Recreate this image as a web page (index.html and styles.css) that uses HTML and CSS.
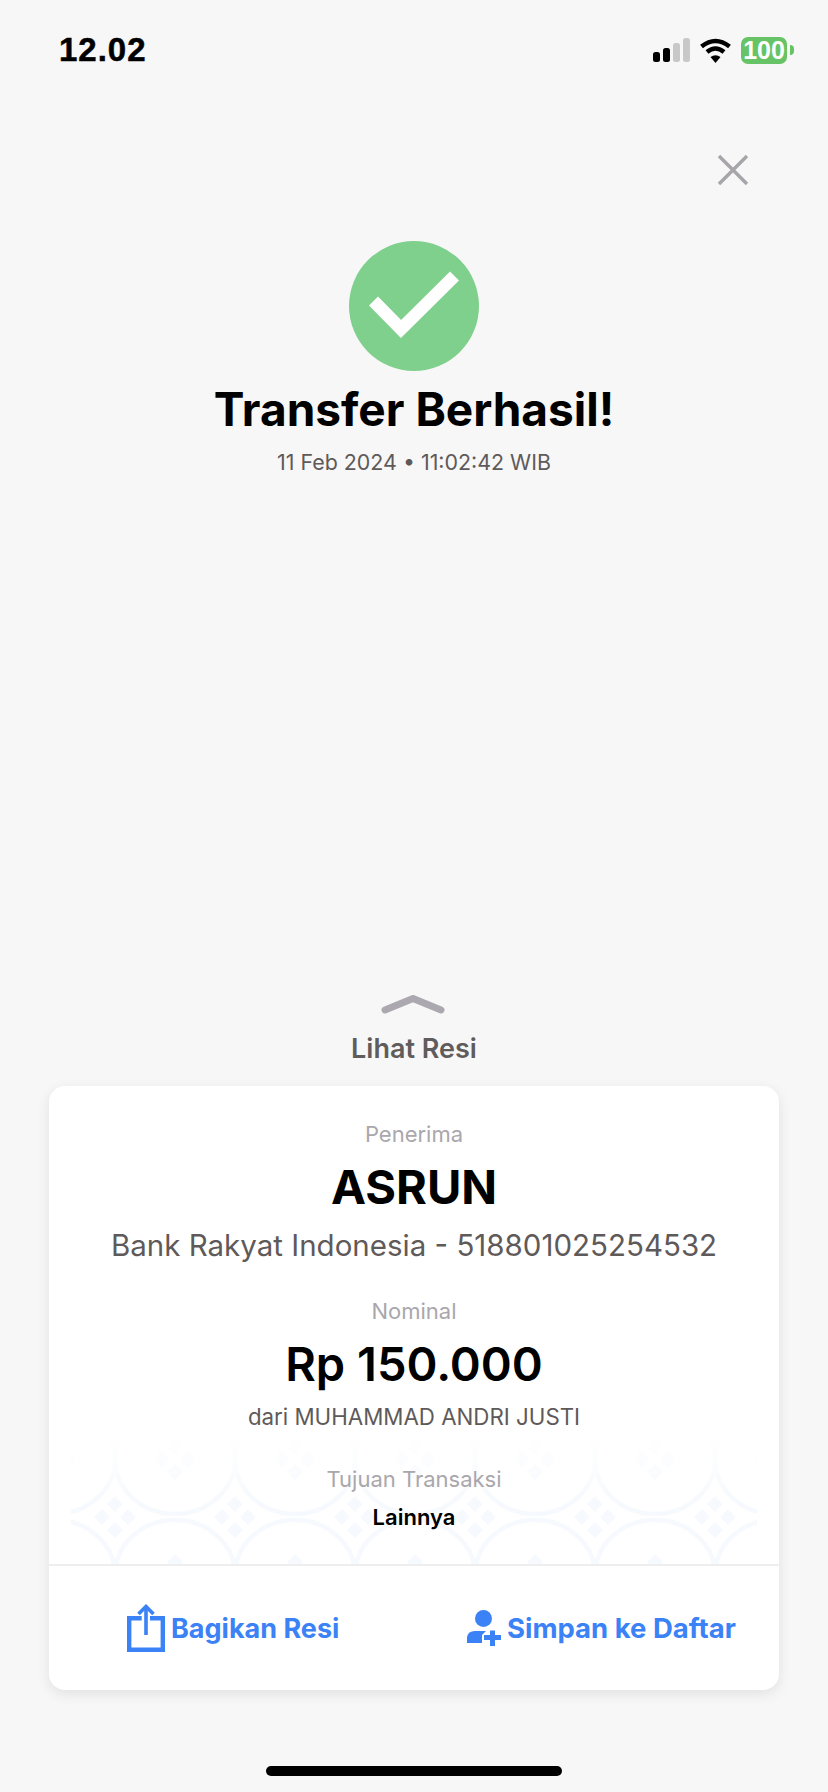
FILE: index.html
```html
<!DOCTYPE html>
<html lang="id">
<head>
  <meta charset="UTF-8">
  <title>Transfer Berhasil</title>
  <link rel="stylesheet" href="styles.css">
</head>
<body>

<div class="screen">
  <div class="status-bar">
    <span class="time">12.02</span>
    <div class="status-icons">
      <svg width="37" height="24" viewBox="0 0 37 24">
        <rect x="0" y="14" width="7" height="10" rx="2.500" fill="#000"/>
        <rect x="10" y="10" width="7" height="14" rx="2.500" fill="#000"/>
        <rect x="20" y="5" width="7" height="19" rx="2.500" fill="#c8c8c8"/>
        <rect x="30" y="0" width="7" height="24" rx="2.500" fill="#c8c8c8"/>
      </svg>
      <svg width="31" height="25" viewBox="0 0 31 25">
        <path d="M1.500 8.500 Q15.500 -2.500 29.500 8.500" fill="none" stroke="#000" stroke-width="4.500"/>
        <path d="M7 14 Q15.500 7 24 14" fill="none" stroke="#000" stroke-width="4.500"/>
        <path d="M10.500 19 L15.500 25 L20.500 19 Q15.500 15.500 10.500 19 Z" fill="#000"/>
      </svg>
      <div class="battery">
        <span class="battery-body">100</span>
        <span class="battery-tip"></span>
      </div>
    </div>
  </div>

  <div class="close-row">
    <svg width="32" height="32" viewBox="0 0 32 32">
      <path d="M2 2 L30 30 M30 2 L2 30" stroke="#a8a5aa" stroke-width="3.400" fill="none"/>
    </svg>
  </div>

  <div class="result">
    <svg width="130" height="130" viewBox="0 0 130 130">
      <circle cx="65" cy="65" r="65" fill="#7fd08c"/>
      <path d="M24.500 60 L52 88 L105.500 35" fill="none" stroke="#fff" stroke-width="12.700"/>
    </svg>
    <h1>Transfer Berhasil!</h1>
    <p class="date">11 Feb 2024 • 11:02:42 WIB</p>
  </div>

  <div class="spacer"></div>

  <div class="receipt-toggle">
    <svg class="chevron" width="66" height="22" viewBox="0 0 66 22">
      <path d="M4 17 L32 5.500 L60 17" fill="none" stroke="#aca8b0" stroke-width="7" stroke-linecap="round" stroke-linejoin="round"/>
    </svg>
    <span>Lihat Resi</span>
  </div>

  <div class="card">
    <div class="card-body">
      <svg class="batik" width="686" height="130" viewBox="0 0 686 130">
        <defs>
          <g id="diamonds">
            <path d="M0 -21 L8 -13 L0 -5 L-8 -13 Z"/>
            <path d="M0 5 L8 13 L0 21 L-8 13 Z"/>
            <path d="M-21 0 L-13 -8 L-5 0 L-13 8 Z"/>
            <path d="M5 0 L13 -8 L21 0 L13 8 Z"/>
          </g>
          <pattern id="batik-tile" width="120" height="116" x="-16" y="25" patternUnits="userSpaceOnUse">
            <g fill="none" stroke="#f6f9fd" stroke-width="4.500">
              <ellipse cx="0" cy="0" rx="60" ry="55"/>
              <ellipse cx="120" cy="0" rx="60" ry="55"/>
              <ellipse cx="0" cy="116" rx="60" ry="55"/>
              <ellipse cx="120" cy="116" rx="60" ry="55"/>
            </g>
            <g fill="#f6f9fd">
              <use href="#diamonds" x="60" y="58"/>
              <use href="#diamonds" x="0" y="0"/>
              <use href="#diamonds" x="120" y="0"/>
              <use href="#diamonds" x="0" y="116"/>
              <use href="#diamonds" x="120" y="116"/>
            </g>
          </pattern>
        </defs>
        <rect width="686" height="130" fill="url(#batik-tile)"/>
      </svg>

      <div class="label first">Penerima</div>
      <div class="name">ASRUN</div>
      <div class="bank">Bank Rakyat Indonesia - 518801025254532</div>

      <div class="label nominal-label">Nominal</div>
      <div class="amount">Rp 150.000</div>
      <div class="sender">dari MUHAMMAD ANDRI JUSTI</div>

      <div class="label purpose-label">Tujuan Transaksi</div>
      <div class="purpose">Lainnya</div>
    </div>

    <div class="card-actions">
      <div class="action">
        <svg width="38" height="48" viewBox="0 0 38 48">
          <path d="M14.700 14.200 H2.200 V45.800 H35.800 V14.200 H23" fill="none" stroke="#3b82f6" stroke-width="4.400"/>
          <path d="M19 31 V3" fill="none" stroke="#3b82f6" stroke-width="3.600"/>
          <path d="M11.500 10 L19 2.500 L26.500 10" fill="none" stroke="#3b82f6" stroke-width="3.600"/>
        </svg>
        <span>Bagikan Resi</span>
      </div>
      <div class="action action-save">
        <svg width="34" height="36" viewBox="0 0 34 36">
          <circle cx="16.500" cy="8.500" r="8.500" fill="#3b82f6"/>
          <path d="M0 33 V27 Q1 21 8 21 H19 L15 25 V33 Z" fill="#3b82f6"/>
          <path d="M25.500 20.500 V36 M17 27.500 H34" fill="none" stroke="#3b82f6" stroke-width="5"/>
        </svg>
        <span>Simpan ke Daftar</span>
      </div>
    </div>
  </div>

  <div class="home-indicator"></div>
</div>

</body>
</html>
```

FILE: styles.css
```css
* {
  box-sizing: border-box;
}

body {
  margin: 0;
  background: #f7f7f7;
  font-family: Inter, "Noto Sans", sans-serif;
  color: #000;
}

.screen {
  width: 828px;
  height: 1792px;
  display: flex;
  flex-direction: column;
  overflow: hidden;
}

/* status bar */
.status-bar {
  display: flex;
  justify-content: space-between;
  align-items: center;
  height: 28px;
  margin-top: 36px;
  padding: 0 34px 0 59px;
}

.time {
  font-family: "Liberation Sans", sans-serif;
  font-size: 33px;
  font-weight: 700;
  letter-spacing: 1px;
  -webkit-text-stroke: 0.5px #000;
}

.status-icons {
  display: flex;
  align-items: center;
  gap: 10px;
}

.battery {
  display: flex;
  align-items: center;
  gap: 3px;
}

.battery-body {
  width: 46px;
  height: 27px;
  border-radius: 7px;
  background: #66c466;
  color: #fff;
  font-family: "Liberation Sans", sans-serif;
  font-size: 25px;
  font-weight: 700;
  line-height: 27px;
  text-align: center;
}

.battery-tip {
  width: 4px;
  height: 10px;
  border-radius: 0 4px 4px 0;
  background: #66c466;
}

/* close */
.close-row {
  display: flex;
  justify-content: flex-end;
  margin-top: 90px;
  padding-right: 79px;
}

/* result */
.result {
  display: flex;
  flex-direction: column;
  align-items: center;
  margin-top: 55px;
}

h1 {
  margin: 10px 0 0;
  font-size: 46px;
  line-height: 56px;
  font-weight: 700;
}

.date {
  margin: 11px 0 0;
  font-size: 21.4px;
  line-height: 28px;
  color: #5f5a5a;
}

.spacer {
  flex: 1;
}

.receipt-toggle {
  display: flex;
  flex-direction: column;
  align-items: center;
  gap: 19px;
  font-size: 27px;
  line-height: 30px;
  font-weight: 600;
  color: #615c5c;
}

.chevron {
  filter: blur(0.7px);
}

/* card */
.card {
  margin: 22px 49px 0;
  width: 730px;
  height: 604px;
  background: #fff;
  border-radius: 16px;
  box-shadow: 0 4px 14px rgba(0,0,0,0.09);
  display: flex;
  flex-direction: column;
}

.card-body {
  position: relative;
  height: 478px;
  text-align: center;
}

.card-body > div {
  position: relative;
}

/* fades out towards the top */
.batik {
  position: absolute;
  left: 22px;
  bottom: 0;
  -webkit-mask-image: linear-gradient(to bottom, transparent 0, #000 70px);
  mask-image: linear-gradient(to bottom, transparent 0, #000 70px);
}

.label {
  font-size: 22px;
  line-height: 28px;
  color: #aaa7ac;
}

.first {
  padding-top: 34px;
}

.name {
  margin-top: 11px;
  font-size: 47px;
  line-height: 56px;
  font-weight: 700;
}

.bank {
  margin-top: 10px;
  font-size: 29.5px;
  line-height: 40px;
  color: #5f5a5a;
}

.nominal-label {
  margin-top: 32px;
}

.amount {
  margin-top: 11px;
  font-size: 47px;
  line-height: 56px;
  font-weight: 600;
}

.sender {
  margin-top: 11px;
  font-size: 22.3px;
  line-height: 28px;
  color: #5f5a5a;
}

.purpose-label {
  margin-top: 34px;
}

.purpose {
  margin-top: 10px;
  font-size: 22px;
  line-height: 28px;
  font-weight: 600;
}

.card-actions {
  flex: 1;
  display: flex;
  justify-content: space-between;
  align-items: center;
  padding: 0 43px 0 78px;
  border-top: 2px solid #eeeeee;
}

.action {
  display: flex;
  align-items: center;
  gap: 6px;
  font-size: 27px;
  font-weight: 700;
  color: #3b82f6;
}

.action-save {
  font-size: 27.500px;
}

.home-indicator {
  width: 296px;
  height: 10px;
  margin: 76px auto 16px;
  border-radius: 5px;
  background: #000;
}
```
